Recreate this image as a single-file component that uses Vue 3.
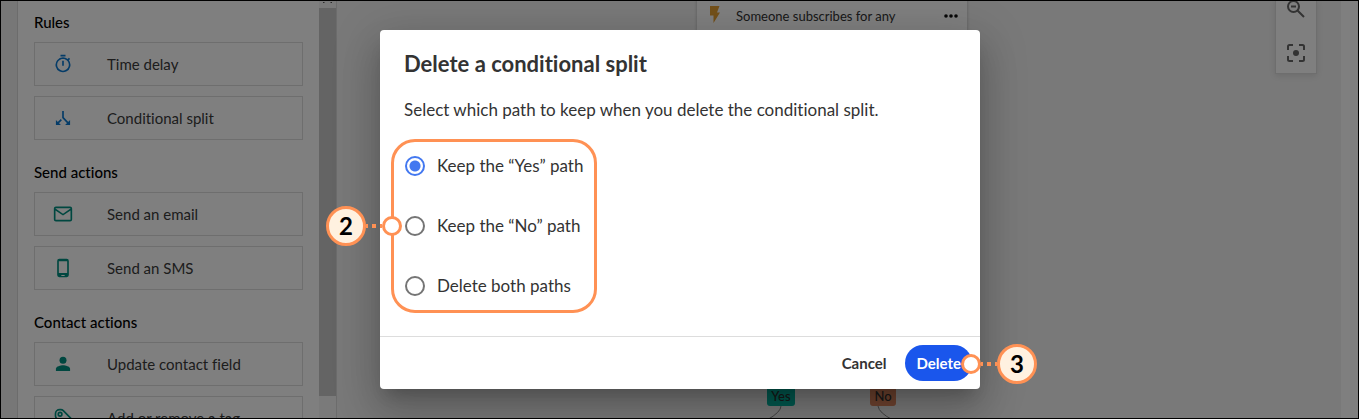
<script setup>
import { ref } from 'vue'

const choice = ref('yes')

const options = [
  { value: 'yes', label: 'Keep the “Yes” path' },
  { value: 'no', label: 'Keep the “No” path' },
  { value: 'both', label: 'Delete both paths' },
]

const groups = [
  {
    title: 'Rules',
    items: [
      { icon: 'timer', label: 'Time delay' },
      { icon: 'split', label: 'Conditional split' },
    ],
  },
  {
    title: 'Send actions',
    items: [
      { icon: 'mail', label: 'Send an email' },
      { icon: 'phone', label: 'Send an SMS' },
    ],
  },
  {
    title: 'Contact actions',
    items: [
      { icon: 'person', label: 'Update contact field' },
      { icon: 'tag', label: 'Add or remove a tag' },
    ],
  },
]
</script>

<template>
  <div class="page">
    <aside class="sidebar">
      <section v-for="g in groups" :key="g.title" class="group">
        <h3>{{ g.title }}</h3>
        <button v-for="i in g.items" :key="i.label" type="button" class="item">
          <svg v-if="i.icon === 'timer'" class="icon blue" viewBox="0 0 24 24">
            <path d="M9 1h6v2H9zM11 8h2v6h-2zM19.03 7.39l1.42-1.42c-.43-.51-.9-.99-1.41-1.41l-1.42 1.42A8.96 8.96 0 0 0 12 4a9 9 0 1 0 7.03 3.39zM12 20c-3.87 0-7-3.13-7-7s3.13-7 7-7 7 3.13 7 7-3.13 7-7 7z" />
          </svg>
          <svg v-else-if="i.icon === 'split'" class="icon blue" viewBox="0 0 24 24">
            <path d="M3.500 14.500v6h6zM20.500 14.500v6h-6z" />
            <path class="stroke" d="M12 3.500v8l6.500 7M10 14l-4.500 4.500" />
          </svg>
          <svg v-else-if="i.icon === 'mail'" class="icon teal" viewBox="0 0 24 24">
            <path d="M20.500 3h-17A2.500 2.500 0 0 0 1 5.500v13A2.500 2.500 0 0 0 3.500 21h17a2.500 2.500 0 0 0 2.500-2.500v-13A2.500 2.500 0 0 0 20.500 3zm.5 16H3V7.800l9 6 9-6zM12 11.600 3 5.500V5h18v.5z" />
          </svg>
          <svg v-else-if="i.icon === 'phone'" class="icon teal" viewBox="0 0 24 24">
            <path d="M16.500 1h-9A2.500 2.500 0 0 0 5 3.500v17A2.500 2.500 0 0 0 7.500 23h9a2.500 2.500 0 0 0 2.500-2.500v-17A2.500 2.500 0 0 0 16.500 1zM14 21.500h-4v-1h4zm3-3.500H7V4h10z" />
          </svg>
          <svg v-else-if="i.icon === 'person'" class="icon teal" viewBox="0 0 24 24">
            <circle cx="12" cy="7.500" r="4.200" />
            <path d="M3.500 20.500v-2.700c0-2.800 5.700-4.200 8.500-4.200s8.500 1.400 8.500 4.200v2.700z" />
          </svg>
          <svg v-else class="icon teal outline" viewBox="0 0 24 24">
            <path d="M3 9.500V7a5 5 0 0 1 5-5h1.500a4 4 0 0 1 2.800 1.200L22 13l-8 9L4.200 12.300A4 4 0 0 1 3 9.500z" />
            <circle cx="8.500" cy="7.500" r="2.200" />
          </svg>
          <span>{{ i.label }}</span>
        </button>
      </section>
    </aside>

    <div class="scrollbar">
      <svg viewBox="0 0 17 7"><path d="M4 1h2l-1 1H4zM11 1h2v1h-1z" /></svg>
      <div class="thumb"></div>
    </div>

    <main class="canvas">
      <div class="node">
        <svg class="bolt" viewBox="0 0 10 17"><path d="M0 0h9.500L7 6.500h3L3.500 17V9.500H0z" /></svg>
        <span>Someone subscribes for any</span>
        <button type="button" class="more" aria-label="More options">
          <svg viewBox="0 0 14 4"><circle cx="2" cy="2" r="1.800" /><circle cx="7" cy="2" r="1.800" /><circle cx="12" cy="2" r="1.800" /></svg>
        </button>
      </div>
      <svg class="paths" viewBox="0 0 140 14">
        <path d="M24 0Q24 6 10 14M121 0Q122 7 136 14" />
      </svg>
      <span class="branch yes">Yes</span>
      <span class="branch no">No</span>

      <div class="tools">
        <button type="button" aria-label="Zoom out">
          <svg viewBox="0 0 18 18" fill="none" stroke-width="2"><circle cx="6.500" cy="6.500" r="5.500" /><path d="M4 6.500h5M10.500 10.500l6.500 6.500" /></svg>
        </button>
        <button type="button" aria-label="Center view">
          <svg viewBox="0 0 18 18" fill="none" stroke-width="2"><path d="M1 6V2.500Q1 1 2.500 1H6M12 1h3.500Q17 1 17 2.500V6M17 12v3.500q0 1.500-1.500 1.500H12M6 17H2.500Q1 17 1 15.500V12" /><circle class="dot" cx="9" cy="9" r="3" /></svg>
        </button>
      </div>
    </main>

    <div class="backdrop">
      <form class="modal" role="dialog" aria-labelledby="dialog-title" @submit.prevent>
        <div class="body">
          <h2 id="dialog-title">Delete a conditional split</h2>
          <p>Select which path to keep when you delete the conditional split.</p>
          <fieldset aria-label="Path to keep">
            <label v-for="o in options" :key="o.value">
              <input v-model="choice" type="radio" name="path" :value="o.value" />
              <span>{{ o.label }}</span>
            </label>
            <div class="highlight">
              <div class="callout step-two">
                <span class="badge">2</span><span class="dots"></span><span class="ring"></span>
              </div>
            </div>
          </fieldset>
        </div>
        <footer>
          <button type="button" class="cancel">Cancel</button>
          <div class="confirm">
            <button type="submit" class="delete">Delete</button>
            <div class="callout step-three">
              <span class="ring"></span><span class="dots"></span><span class="badge">3</span>
            </div>
          </div>
        </footer>
      </form>
    </div>
  </div>
</template>

<style>
body {
  overflow: hidden;
}
</style>

<style scoped>
* {
  box-sizing: border-box;
}
.page {
  position: relative;
  display: flex;
  height: 100vh;
  overflow: hidden;
  border: 1px solid #000;
  padding-right: 17px;
  background: linear-gradient(90deg, #efefef 16px, #fff 16px);
  font-family: Lato, "Open Sans", sans-serif;
  font-variant-ligatures: none;
  color: #333;
}
button {
  font: inherit;
  font-variant-ligatures: none;
  color: inherit;
  border: 0;
  background: none;
  padding: 0;
}
h2, h3, p, fieldset {
  margin: 0;
  padding: 0;
  border: 0;
}
svg {
  display: block;
}
.sidebar {
  width: 302px;
  flex: none;
  margin-left: 16px;
  padding: 11px 16px 0;
  border-left: 1px solid #d8d8d8;
  background: #fff;
}
.group {
  display: flex;
  flex-direction: column;
  gap: 10px;
  margin-bottom: 22px;
}
h3 {
  font-size: 15px;
  line-height: 20px;
  font-weight: 500;
  color: #000;
}
.item {
  display: flex;
  align-items: center;
  gap: 34px;
  height: 44px;
  padding: 0 18px;
  border: 1px solid #dcdcdc;
  font-size: 15px;
  line-height: 20px;
  color: #3a3a3a;
}
.icon {
  width: 20px;
  height: 20px;
}
.blue {
  fill: #0b78d0;
}
.stroke {
  fill: none;
  stroke: #0b78d0;
  stroke-width: 2;
}
.teal {
  fill: #008f80;
}
.outline {
  fill: none;
  stroke: #008f80;
  stroke-width: 2;
}
.scrollbar {
  width: 18px;
  flex: none;
  background: #f4f4f4;
  border-right: 1px solid #d8d8d8;
}
.scrollbar svg {
  width: 17px;
  height: 7px;
  fill: #555;
}
.thumb {
  height: 388px;
  background: #c9c9c9;
}
.canvas {
  position: relative;
  flex: 1;
  background: #f2f2f2;
}
.node {
  position: absolute;
  left: 360px;
  top: -60px;
  width: 270px;
  height: 120px;
  padding: 65px 9px 0 13px;
  display: flex;
  align-items: flex-start;
  background: #fff;
  box-shadow: 0 0 3px rgba(0, 0, 0, 0.25);
  font-size: 13px;
  line-height: 20px;
}
.node span {
  flex: 1;
  margin-left: 16px;
}
.bolt {
  width: 10px;
  height: 17px;
  fill: #e6a032;
}
.more {
  padding-top: 8px;
}
.more svg {
  width: 14px;
  height: 4px;
  fill: #111;
}
.branch {
  position: absolute;
  top: 381px;
  width: 28px;
  height: 24px;
  padding-top: 4px;
  border-radius: 3px;
  font-size: 13px;
  line-height: 20px;
  font-weight: 500;
  text-align: center;
}
.yes {
  left: 430px;
  background: #00b5a0;
}
.no {
  left: 533px;
  width: 26px;
  background: #e08860;
}
.paths {
  position: absolute;
  left: 420px;
  top: 405px;
  width: 140px;
  height: 14px;
  fill: none;
  stroke: #888;
}
.tools {
  position: absolute;
  top: -2px;
  right: 24px;
  width: 42px;
  height: 75px;
  padding-bottom: 11px;
  display: flex;
  flex-direction: column;
  align-items: center;
  justify-content: space-between;
  background: #fff;
  border: 1px solid #ddd;
  box-shadow: 0 2px 6px rgba(0, 0, 0, 0.1);
}
.tools svg {
  width: 18px;
  height: 18px;
  stroke: #666;
}
.tools .dot {
  fill: #666;
  stroke: none;
}
.backdrop {
  position: absolute;
  inset: 0;
  display: flex;
  align-items: center;
  justify-content: center;
  padding-left: 1px;
  background: rgba(0, 0, 0, 0.5);
}
.modal {
  width: 600px;
  border-radius: 4px;
  background: #fff;
  box-shadow: 0 11px 15px -7px rgba(0, 0, 0, 0.2), 0 24px 38px 3px rgba(0, 0, 0, 0.14), 0 9px 46px 8px rgba(0, 0, 0, 0.12);
}
.body {
  padding: 20px 24px;
}
h2 {
  margin-bottom: 20px;
  font-size: 22px;
  line-height: 28px;
  font-weight: 700;
}
p {
  font-size: 17px;
  line-height: 24px;
}
fieldset {
  position: relative;
  width: fit-content;
  margin-top: 14px;
}
label {
  display: flex;
  align-items: center;
  gap: 12px;
  height: 60px;
  padding-left: 1px;
  font-size: 17px;
  line-height: 24px;
}
input {
  appearance: none;
  width: 20px;
  height: 20px;
  margin: 0;
  border: 2px solid #757575;
  border-radius: 50%;
}
input:checked {
  border-color: #4378f0;
  background: radial-gradient(circle, #4378f0 5px, transparent 6px);
}
.highlight {
  position: absolute;
  inset: 3px -14px 3px -13px;
  border: 3px solid #ff9154;
  border-radius: 24px;
  pointer-events: none;
}
.callout {
  position: absolute;
  display: flex;
  align-items: center;
}
.step-two {
  right: calc(100% - 8px);
  top: calc(50% - 20px);
}
.step-three {
  left: calc(100% - 11px);
  top: -1px;
}
.badge {
  width: 40px;
  height: 40px;
  border: 3px solid #ff9154;
  border-radius: 50%;
  background: #fff1e0;
  color: #000;
  font-size: 24px;
  line-height: 34px;
  font-weight: 700;
  text-align: center;
}
.dots {
  width: 16px;
  height: 4px;
  background: repeating-linear-gradient(90deg, #ff9154 0 2px, transparent 2px 6px, #ff9154 6px 8px);
}
.ring {
  width: 20px;
  height: 20px;
  border: 3px solid #ff9154;
  border-radius: 50%;
  background: #fff;
}
footer {
  display: flex;
  align-items: center;
  justify-content: flex-end;
  gap: 8px;
  height: 53px;
  padding-right: 8px;
  border-top: 1px solid #ddd;
  font-size: 15px;
  font-weight: 700;
}
.confirm {
  position: relative;
}
.cancel, .delete {
  height: 36px;
  padding: 0 11px;
  border-radius: 18px;
}
.delete {
  display: block;
  background: #1a56ec;
  color: #fff;
}
</style>
